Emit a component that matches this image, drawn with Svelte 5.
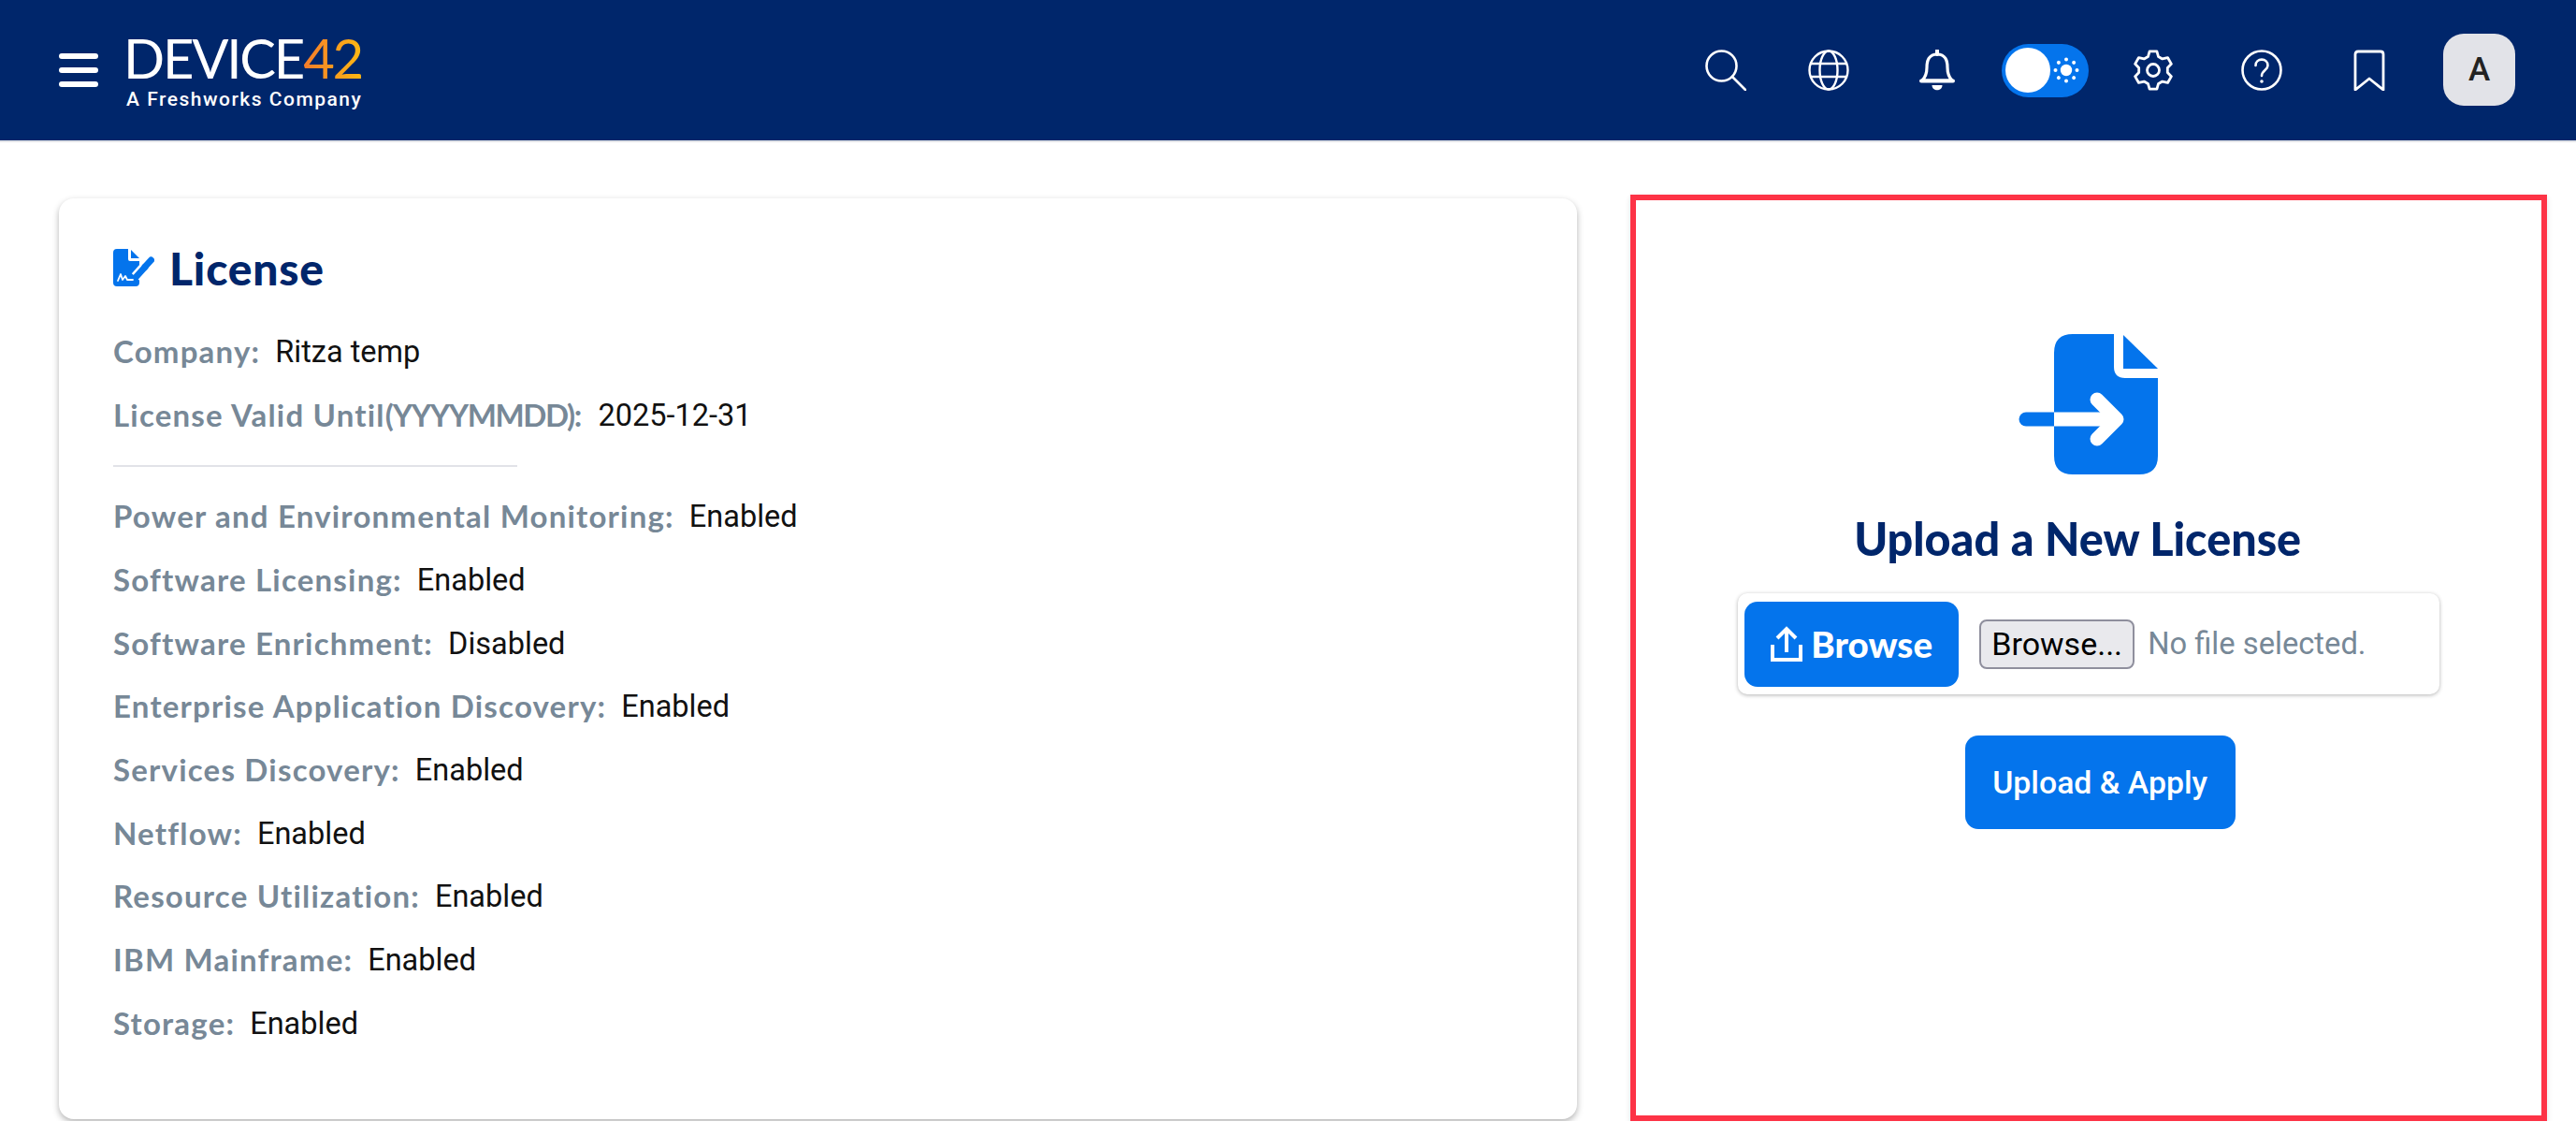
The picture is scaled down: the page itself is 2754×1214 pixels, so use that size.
<script>
  const modules = [
    ['Power and Environmental Monitoring', 'Enabled'],
    ['Software Licensing', 'Enabled'],
    ['Software Enrichment', 'Disabled'],
    ['Enterprise Application Discovery', 'Enabled'],
    ['Services Discovery', 'Enabled'],
    ['Netflow', 'Enabled'],
    ['Resource Utilization', 'Enabled'],
    ['IBM Mainframe', 'Enabled'],
    ['Storage', 'Enabled']
  ]
  const rays = [0, 45, 90, 135, 180, 225, 270, 315]

  // six toothed outline for the settings icon
  function gearPath() {
    const pts = []
    const at = (r, deg) => {
      const a = (deg * Math.PI) / 180
      return (22 + r * Math.cos(a)).toFixed(2) + ' ' + (22 + r * Math.sin(a)).toFixed(2)
    }
    for (let i = 0; i < 6; i++) {
      const a = i * 60 - 90
      pts.push(at(15.5, a - 21), at(20.5, a - 11), at(20.5, a + 11), at(15.5, a + 21))
    }
    return 'M' + pts.join(' L') + ' Z'
  }
</script>

<header class="topbar">
  <div class="brand">
    <div class="burger"><span></span><span></span><span></span></div>
    <div class="logo">
      <div class="wordmark">DEVICE<span class="num">42</span></div>
      <div class="tagline">A Freshworks Company</div>
    </div>
  </div>

  <nav class="tools">
    <div class="slot">
      <svg class="search" width="44" height="44" viewBox="0 0 44 44" fill="none" stroke="#fff" stroke-width="2.6" stroke-linecap="round">
        <circle cx="17.5" cy="17.5" r="16" />
        <path d="M29 29 L43 43" />
      </svg>
    </div>
    <div class="slot">
      <svg width="44" height="44" viewBox="0 0 44 44" fill="none" stroke="#fff" stroke-width="2.4">
        <circle cx="22" cy="22" r="20.5" />
        <ellipse cx="22" cy="22" rx="9.5" ry="20.5" />
        <path d="M3 15 H41 M3 29 H41" />
      </svg>
    </div>
    <div class="slot">
      <svg width="38" height="44" viewBox="0 0 38 44" fill="none" stroke="#fff" stroke-width="3.2" stroke-linejoin="round">
        <path d="M19 1 V5" stroke-linecap="round" stroke-width="4" />
        <path d="M19 5 C10 5 8 12 8 19 C8 26 6 30 3 33 H35 C32 30 30 26 30 19 C30 12 28 5 19 5 Z" />
        <path d="M2 33.500 H36" stroke-linecap="round" stroke-width="4" />
        <path d="M13.500 38 H24.500 C24.500 45 13.500 45 13.500 38 Z" fill="#fff" stroke="none" />
      </svg>
    </div>
    <div class="slot">
      <div class="toggle">
        <span class="knob"></span>
        <svg width="36" height="36" viewBox="0 0 36 36" fill="#fff">
          <circle cx="18" cy="18" r="6.2" />
          {#each rays as r}
            <circle cx="18" cy="6.500" r="2" transform="rotate({r} 18 18)" />
          {/each}
        </svg>
      </div>
    </div>
    <div class="slot">
      <svg width="44" height="44" viewBox="0 0 44 44" fill="none" stroke="#fff" stroke-width="2.8" stroke-linejoin="round">
        <path d={gearPath()} />
        <circle cx="22" cy="22" r="6.500" />
      </svg>
    </div>
    <div class="slot">
      <svg width="44" height="44" viewBox="0 0 44 44" fill="none" stroke="#fff" stroke-width="2.6" stroke-linecap="round">
        <circle cx="22" cy="22" r="20.5" />
        <path d="M15.5 17 C15.5 8.500 28.500 8.500 28.500 17 C28.500 22 22 22 22 28" />
        <circle cx="22" cy="34" r="1.800" fill="#fff" stroke="none" />
      </svg>
    </div>
    <div class="slot">
      <svg width="34" height="44" viewBox="0 0 34 44" fill="none" stroke="#fff" stroke-width="2.8" stroke-linejoin="round">
        <path d="M2 43 V5 Q2 2 5 2 H29 Q32 2 32 5 V43 L17 31 Z" />
      </svg>
    </div>
    <div class="avatar">A</div>
  </nav>
</header>

<main class="page">
  <section class="card">
    <h1 class="title">
      <svg width="44" height="40" viewBox="0 0 44 40">
        <path d="M4 0 H16 V11 Q16 13 18 13 H28 V36 Q28 40 24 40 H4 Q0 40 0 36 V4 Q0 0 4 0 Z" fill="#0474ec" />
        <path d="M19 1 L28 10 H19 Z" fill="#0474ec" />
        <path d="M24 30 L40 12" stroke="#fff" stroke-width="11" />
        <path d="M23.500 31 L33 20.500 M35 18 L40.500 12" stroke="#0474ec" stroke-width="7" stroke-linecap="round" />
        <path d="M35 18 L33 20.500" stroke="#0474ec" stroke-width="7" />
        <path d="M5 34 L8 27 L10 33 L13 29 L15 33 L21 33" fill="none" stroke="#fff" stroke-width="1.800" stroke-linecap="round" stroke-linejoin="round" />
      </svg>
      License
    </h1>

    <p class="row"><span class="key">Company:</span><span class="val">Ritza temp</span></p>
    <p class="row"><span class="key">License Valid Until<span class="tight">(YYYYMMDD)</span>:</span><span class="val">2025-12-31</span></p>
    <hr class="rule" />
    {#each modules as [name, state]}
      <p class="row"><span class="key">{name}:</span><span class="val">{state}</span></p>
    {/each}
  </section>

  <section class="upload">
    <svg class="upload-icon" width="150" height="150" viewBox="0 0 150 150">
      <path d="M58 0 H102 V35 Q102 47 114 47 H149 V130 Q149 150 129 150 H58 Q38 150 38 130 V20 Q38 0 58 0 Z" fill="#0474ec" />
      <path d="M112 1 L149 37 H112 Z" fill="#0474ec" />
      <path d="M8 91 H38" stroke="#0474ec" stroke-width="15" stroke-linecap="round" />
      <path d="M38 91 H104" stroke="#fff" stroke-width="15" />
      <path d="M84 70 L105 91 L84 112" fill="none" stroke="#fff" stroke-width="15" stroke-linecap="round" stroke-linejoin="round" />
    </svg>
    <h2 class="upload-title">Upload a New License</h2>

    <div class="picker">
      <button class="primary browse" type="button">
        <svg width="34" height="38" viewBox="0 0 34 38" fill="none" stroke="#fff" stroke-width="4">
          <path d="M2 20 V36 H32 V20" />
          <path d="M17 28 V4 M7 13 L17 3 L27 13" />
        </svg>
        Browse
      </button>
      <button class="native" type="button">Browse...</button>
      <span class="nofile">No file selected.</span>
    </div>

    <button class="primary apply" type="button">Upload &amp; Apply</button>
  </section>
</main>

<style>
  :global(body) {
    margin: 0;
    background: #fff;
  }

  .topbar {
    height: 150px;
    background: #00266b;
    border-bottom: 2px solid #e2e3e8;
    display: flex;
    align-items: center;
    justify-content: space-between;
    padding-right: 65px;
  }

  .brand {
    display: flex;
    align-items: center;
    gap: 30px;
    padding-left: 63px;
  }

  .burger {
    display: flex;
    flex-direction: column;
    gap: 9px;
    width: 42px;
  }

  .burger span {
    height: 6px;
    border-radius: 3px;
    background: #fff;
  }

  .logo {
    margin-top: 6px;
  }

  .wordmark {
    margin-left: -3px;
    font-family: Lato, sans-serif;
    font-weight: 400;
    font-size: 58px;
    line-height: 46px;
    letter-spacing: -2.2px;
    color: #fff;
  }

  .num {
    background: linear-gradient(90deg, #f47b2b, #fdb813);
    -webkit-background-clip: text;
    background-clip: text;
    color: transparent;
  }

  .tagline {
    font-family: Roboto, sans-serif;
    font-weight: 500;
    font-size: 21px;
    line-height: 24px;
    letter-spacing: 1.5px;
    color: #fff;
    margin-top: 9px;
  }

  .tools {
    display: flex;
    align-items: center;
  }

  .slot {
    width: 115.6px;
    display: flex;
    justify-content: center;
    align-items: center;
  }

  .search {
    margin-left: 10px;
  }

  .toggle {
    width: 93px;
    height: 57px;
    border-radius: 29px;
    background: #0474ec;
    display: flex;
    align-items: center;
    padding-left: 4px;
    box-sizing: border-box;
  }

  .knob {
    width: 48px;
    height: 48px;
    border-radius: 50%;
    background: #fff;
    margin-right: -1px;
  }

  .avatar {
    width: 77px;
    height: 77px;
    margin: -2px 0 0 21px;
    border-radius: 22px;
    background: #e2e3e8;
    color: #222;
    display: flex;
    align-items: center;
    justify-content: center;
    font-family: Roboto, sans-serif;
    font-weight: 500;
    font-size: 35px;
  }

  .page {
    display: flex;
    align-items: flex-start;
    gap: 57px;
    padding: 56px 31px 0 63px;
  }

  .card {
    width: 1624px;
    box-sizing: border-box;
    margin-top: 4px;
    height: 984px;
    padding: 49px 58px 0;
    border-radius: 16px;
    background: #fff;
    box-shadow: 0 3px 7px rgba(0, 0, 0, 0.3);
  }

  .title {
    display: flex;
    align-items: center;
    gap: 16px;
    margin: 0 0 30px;
    height: 50px;
    font-family: Lato, sans-serif;
    font-weight: 900;
    font-size: 48px;
    letter-spacing: 0.8px;
    color: #00266b;
  }

  .row {
    margin: 0;
    height: 67.7px;
    display: flex;
    align-items: center;
    gap: 16px;
  }

  .key {
    font-family: Lato, sans-serif;
    font-size: 33px;
    font-weight: 700;
    letter-spacing: 1.2px;
    color: #778897;
  }

  .tight {
    letter-spacing: -1.4px;
  }

  .val {
    margin-top: 2px;
    font-family: Roboto, sans-serif;
    font-size: 32.5px;
    color: #111;
  }

  .rule {
    width: 432px;
    margin: 21px 0 18px;
    border: 0;
    border-top: 2px solid #e2e3e8;
  }

  .upload {
    width: 980px;
    height: 990px;
    box-sizing: border-box;
    border: 6px solid #fd3346;
    display: flex;
    flex-direction: column;
    align-items: center;
    padding-top: 143px;
    box-shadow: 0 3px 6px rgba(0, 0, 0, 0.12);
  }

  .upload-title {
    margin: 40px 24px 31px 0;
    font-family: Lato, sans-serif;
    font-weight: 900;
    font-size: 48.5px;
    line-height: 56px;
    color: #00266b;
  }

  .picker {
    width: 750px;
    height: 108px;
    box-sizing: border-box;
    padding: 8px 7px;
    border-radius: 10px;
    background: #fff;
    box-shadow: 0 1px 4px rgba(0, 0, 0, 0.3);
    display: flex;
    align-items: center;
  }

  .primary {
    border: 0;
    border-radius: 14px;
    background: #0474ec;
    color: #fff;
    display: flex;
    align-items: center;
    justify-content: center;
  }

  .browse {
    width: 229px;
    height: 91px;
    gap: 9px;
    font-family: Lato, sans-serif;
    font-weight: 900;
    font-size: 38.5px;
  }

  .native {
    width: 166px;
    height: 53px;
    margin-left: 22px;
    padding: 0;
    border: 2px solid #8f8f9d;
    border-radius: 8px;
    background: #e9e9ed;
    color: #000;
    font-family: Roboto, sans-serif;
    font-size: 34px;
  }

  .nofile {
    margin-left: 14px;
    font-family: Roboto, sans-serif;
    font-size: 32.7px;
    color: #778897;
  }

  .apply {
    width: 289px;
    height: 100px;
    margin: 44px 0 0 24px;
    font-family: Roboto, sans-serif;
    font-weight: 500;
    font-size: 33.8px;
  }
</style>
